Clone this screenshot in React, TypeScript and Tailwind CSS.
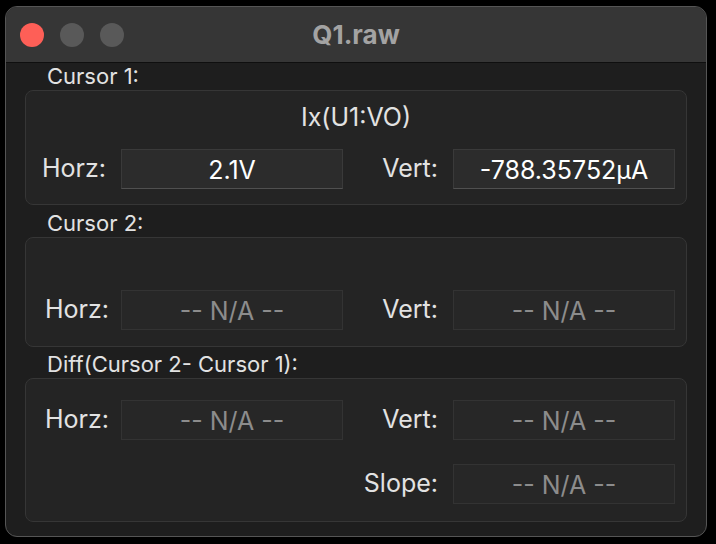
import React from "react";

const font = { fontFamily: "Inter, 'Noto Sans', sans-serif" };

function Field({ value, disabled }: { value: string; disabled?: boolean }) {
  return (
    <div
      className={
        "w-[222px] h-[40px] flex items-center justify-center border pt-[3px] text-[25px] " +
        (disabled
          ? "bg-[#272727] border-[#333333] text-[#8c8c8c]"
          : "bg-[#2c2c2c] border-t-[#3a3a3a] border-x-[#3a3a3a] border-b-[#505050] text-white")
      }
    >
      {value}
    </div>
  );
}

function Section({ title, children, cls }: { title: string; children: React.ReactNode; cls: string }) {
  return (
    <div className={cls}>
      <div className="h-[24px] leading-[24px] pl-[22px] text-[22px] text-[#e2e2e2] mb-[2px]">{title}</div>
      {children}
    </div>
  );
}

function FRow({
  l,
  lv,
  ld,
  r,
  rv,
  rd,
  lpr = "pr-[14px]",
}: {
  l?: string;
  lv?: string;
  ld?: boolean;
  r: string;
  rv: string;
  rd?: boolean;
  lpr?: string;
}) {
  return (
    <div className="flex items-center">
      {l ? (
        <>
          <div className={"w-[95px] flex justify-end text-[25px] text-[#e2e2e2] " + lpr}>{l}</div>
          <Field value={lv || ""} disabled={ld} />
        </>
      ) : (
        <div className="w-[317px]" />
      )}
      <div className="w-[110px] flex justify-end pr-[15px] text-[25px] text-[#e2e2e2]">{r}</div>
      <Field value={rv} disabled={rd} />
    </div>
  );
}

export default function App() {
  return (
    <div className="w-[716px] h-[544px] bg-black pt-[6px] pl-[5px]" style={font}>
      <div className="w-[702px] h-[531px] rounded-[12px] border border-[#555555] bg-[#1e1e1e] overflow-hidden flex flex-col">
        <div className="h-[56px] shrink-0 bg-[#363636] border-b border-[#0f0f0f] flex items-center relative">
          <div className="flex items-center gap-[16px] pl-[14px]">
            <div className="w-[24px] h-[24px] rounded-full bg-[#fe5f57]" />
            <div className="w-[24px] h-[24px] rounded-full bg-[#595959]" />
            <div className="w-[24px] h-[24px] rounded-full bg-[#595959]" />
          </div>
          <div className="absolute left-0 right-0 text-center text-[26px] font-bold text-[#a3a3a3] pointer-events-none">
            Q1.raw
          </div>
        </div>
        <div className="px-[19px]">
          <Section title="Cursor 1:" cls="mt-[1px]">
            <div className="h-[115px] rounded-[8px] border border-[#363636] bg-[#242424] pt-[12px]">
              <div className="text-center text-[25px] leading-[28px] text-[#e2e2e2]">Ix(U1:VO)</div>
              <div className="mt-[18px]">
                <FRow l="Horz:" lv="2.1V" r="Vert:" rv="-788.35752µA" lpr="pr-[15px]" />
              </div>
            </div>
          </Section>
          <Section title="Cursor 2:" cls="mt-[6px]">
            <div className="h-[110px] rounded-[8px] border border-[#363636] bg-[#242424] pt-[52px]">
              <FRow l="Horz:" lv="-- N/A --" ld r="Vert:" rv="-- N/A --" rd lpr="pr-[12px]" />
            </div>
          </Section>
          <Section title="Diff(Cursor 2- Cursor 1):" cls="mt-[5px]">
            <div className="h-[144px] rounded-[8px] border border-[#363636] bg-[#242424] pt-[21px] flex flex-col gap-[24px]">
              <FRow l="Horz:" lv="-- N/A --" ld r="Vert:" rv="-- N/A --" rd lpr="pr-[12px]" />
              <FRow r="Slope:" rv="-- N/A --" rd />
            </div>
          </Section>
        </div>
      </div>
    </div>
  );
}
